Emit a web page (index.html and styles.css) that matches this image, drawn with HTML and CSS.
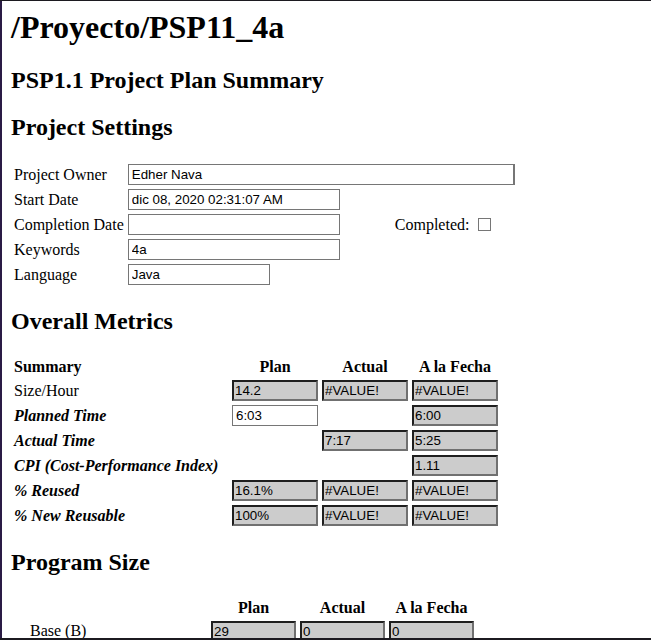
FILE: index.html
```html
<!DOCTYPE html>
<html lang="es">
<head>
<meta charset="utf-8">
<title>PSP1.1 Project Plan Summary</title>
<link rel="stylesheet" href="styles.css">
</head>
<body>
<h1>/Proyecto/PSP11_4a</h1>
<h2>PSP1.1 Project Plan Summary</h2>
<h2>Project Settings</h2>
<table class="settings">
  <tr>
    <td class="lbl">Project Owner</td>
    <td colspan="2"><input class="field owner" type="text" value="Edher Nava"></td>
  </tr>
  <tr>
    <td class="lbl">Start Date</td>
    <td class="c2"><input class="field date" type="text" value="dic 08, 2020 02:31:07 AM"></td>
    <td class="c3"></td>
  </tr>
  <tr>
    <td class="lbl">Completion Date</td>
    <td class="c2"><input class="field date" type="text" value=""></td>
    <td class="c3 done">Completed: <input class="check" type="checkbox"></td>
  </tr>
  <tr>
    <td class="lbl">Keywords</td>
    <td class="c2"><input class="field date" type="text" value="4a"></td>
    <td class="c3"></td>
  </tr>
  <tr>
    <td class="lbl">Language</td>
    <td class="c2"><input class="field lang" type="text" value="Java"></td>
    <td class="c3"></td>
  </tr>
</table>

<h2>Overall Metrics</h2>
<table class="metrics">
  <tr>
    <th class="left">Summary</th>
    <th>Plan</th>
    <th>Actual</th>
    <th>A la Fecha</th>
  </tr>
  <tr>
    <td class="mlbl">Size/Hour</td>
    <td><input class="ro" type="text" value="14.2" readonly></td>
    <td><input class="ro" type="text" value="#VALUE!" readonly></td>
    <td><input class="ro" type="text" value="#VALUE!" readonly></td>
  </tr>
  <tr>
    <td class="mlbl em">Planned Time</td>
    <td><input class="field cell" type="text" value="6:03"></td>
    <td></td>
    <td><input class="ro" type="text" value="6:00" readonly></td>
  </tr>
  <tr>
    <td class="mlbl em">Actual Time</td>
    <td></td>
    <td><input class="ro" type="text" value="7:17" readonly></td>
    <td><input class="ro" type="text" value="5:25" readonly></td>
  </tr>
  <tr>
    <td class="mlbl em">CPI (Cost-Performance Index)</td>
    <td></td>
    <td></td>
    <td><input class="ro" type="text" value="1.11" readonly></td>
  </tr>
  <tr>
    <td class="mlbl em">% Reused</td>
    <td><input class="ro" type="text" value="16.1%" readonly></td>
    <td><input class="ro" type="text" value="#VALUE!" readonly></td>
    <td><input class="ro" type="text" value="#VALUE!" readonly></td>
  </tr>
  <tr>
    <td class="mlbl em">% New Reusable</td>
    <td><input class="ro" type="text" value="100%" readonly></td>
    <td><input class="ro" type="text" value="#VALUE!" readonly></td>
    <td><input class="ro" type="text" value="#VALUE!" readonly></td>
  </tr>
</table>

<h2>Program Size</h2>
<table class="size">
  <tr>
    <th class="slbl"></th>
    <th>Plan</th>
    <th>Actual</th>
    <th>A la Fecha</th>
  </tr>
  <tr>
    <td class="slbl indent">Base (B)</td>
    <td><input class="ro small" type="text" value="29" readonly></td>
    <td><input class="ro small" type="text" value="0" readonly></td>
    <td><input class="ro small" type="text" value="0" readonly></td>
  </tr>
</table>
</body>
</html>
```

FILE: styles.css
```css
html {
  background: #1c1a20;
  height: 100%;
  overflow: hidden;
}

body {
  margin: 1px 0 0 0;
  height: 637px;
  overflow: hidden;
  box-sizing: border-box;
  padding: 8px 8px 0 9px;
  background: #ffffff;
  border-left: 2px solid #2a1b45;
  font-family: "Liberation Serif", "Times New Roman", serif;
  font-size: 16px;
  color: #000;
}

h1 {
  font-size: 32px;
  font-weight: bold;
  margin: 0 0 21.44px 0;
}

h2 {
  font-size: 24px;
  font-weight: bold;
  margin: 19.92px 0;
}

table {
  border-spacing: 2px;
  border-collapse: separate;
}

td, th {
  padding: 1px;
}

th {
  font-weight: bold;
  text-align: center;
}

th.left {
  text-align: left;
}

.lbl {
  white-space: nowrap;
}

.c2 {
  width: 212px;
}

.c3 {
  width: 171px;
}

.done {
  padding-left: 52px;
  white-space: nowrap;
}

.field {
  display: block;
  box-sizing: border-box;
  height: 21px;
  border: 1px solid #767676;
  padding: 0 3px;
  margin: 0;
  background: #fff;
  font-family: "Liberation Sans", Arial, sans-serif;
  font-size: 13.333px;
  color: #000;
  outline: none;
}

.owner {
  width: 387px;
  border-right-width: 2px;
}

.date {
  width: 212px;
}

.lang {
  width: 142px;
}

.cell {
  width: 86px;
}

.check {
  -webkit-appearance: none;
  appearance: none;
  box-sizing: border-box;
  width: 13px;
  height: 13px;
  margin: 0 3px 0 5px;
  border: 1px solid #767676;
  border-radius: 0;
  background: #fff;
  vertical-align: -1px;
}

.metrics .mlbl {
  width: 214px;
  white-space: nowrap;
}

.em {
  font-weight: bold;
  font-style: italic;
}

.ro {
  display: block;
  box-sizing: border-box;
  width: 86px;
  height: 21px;
  margin: 0;
  padding: 0 1px;
  border-style: solid;
  border-width: 2px;
  border-color: #1f1f1f #707070 #707070 #1f1f1f;
  background: #cccccc;
  font-family: "Liberation Sans", Arial, sans-serif;
  font-size: 13.333px;
  color: #000;
  outline: none;
}

.ro.small {
  width: 85px;
}

.size .slbl {
  width: 193px;
}

.indent {
  box-sizing: border-box;
  padding-left: 17px;
}
```
